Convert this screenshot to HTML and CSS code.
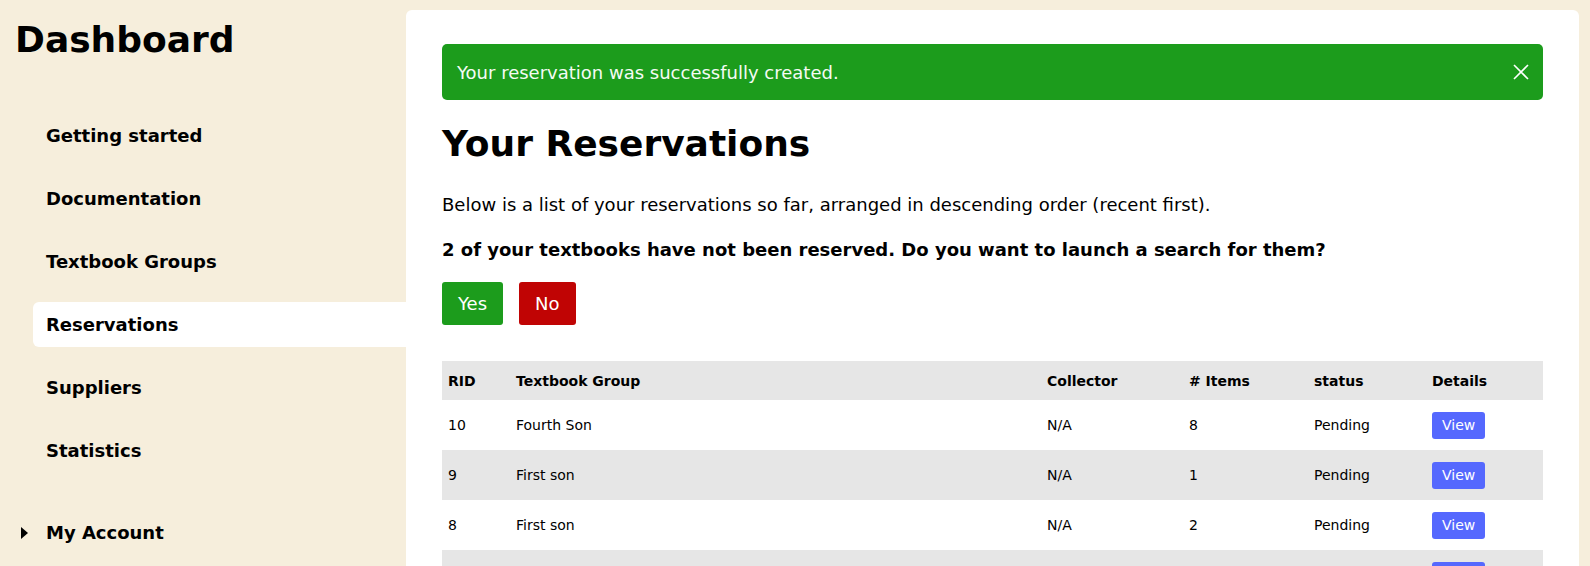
FILE: index.html
```html
<!DOCTYPE html>
<html lang="en">
<head>
  <meta charset="UTF-8">
  <meta name="viewport" content="width=device-width, initial-scale=1.0">
  <title>Dashboard - Reservations</title>

  <link rel="stylesheet" href="styles.css">

</head>

<body>
  <div id="wrap">
    <!-- 사이드바 -->
    <aside class="side">
      <h1 class="logo">Dashboard</h1>
      <ul class="nav">
        <li><a href="#">Getting started</a></li>
        <li><a href="#">Documentation</a></li>
        <li><a href="#">Textbook Groups</a></li>
        <li class="on"><a href="#">Reservations</a></li>
        <li><a href="#">Suppliers</a></li>
        <li><a href="#">Statistics</a></li>
      </ul>
      <div class="account">
        <span class="arrow"></span>
        <a href="#">My Account</a>
      </div>
    </aside>

    <!-- 본문 카드 -->
    <main class="card">
      <div class="alert">
        <span>Your reservation was successfully created.</span>
        <button class="close" type="button" aria-label="Close">
          <svg width="16" height="16" viewBox="0 0 16 16">
            <path d="M1 1 L15 15 M15 1 L1 15" stroke="#fff" stroke-width="1.6" fill="none"/>
          </svg>
        </button>
      </div>

      <h2 class="tit">Your Reservations</h2>
      <p class="desc">Below is a list of your reservations so far, arranged in descending order (recent first).</p>
      <p class="ask">2 of your textbooks have not been reserved. Do you want to launch a search for them?</p>

      <div class="btns">
        <button class="btn yes" type="button">Yes</button>
        <button class="btn no" type="button">No</button>
      </div>

      <table class="list">
        <colgroup>
          <col class="c1">
          <col class="c2">
          <col class="c3">
          <col class="c4">
          <col class="c5">
          <col class="c6">
        </colgroup>
        <thead>
          <tr>
            <th>RID</th>
            <th>Textbook Group</th>
            <th>Collector</th>
            <th># Items</th>
            <th>status</th>
            <th>Details</th>
          </tr>
        </thead>
        <tbody>
          <tr>
            <td>10</td>
            <td>Fourth Son</td>
            <td>N/A</td>
            <td>8</td>
            <td>Pending</td>
            <td><a class="view" href="#">View</a></td>
          </tr>
          <tr>
            <td>9</td>
            <td>First son</td>
            <td>N/A</td>
            <td>1</td>
            <td>Pending</td>
            <td><a class="view" href="#">View</a></td>
          </tr>
          <tr>
            <td>8</td>
            <td>First son</td>
            <td>N/A</td>
            <td>2</td>
            <td>Pending</td>
            <td><a class="view" href="#">View</a></td>
          </tr>
          <tr>
            <td>7</td>
            <td>Second son</td>
            <td>N/A</td>
            <td>5</td>
            <td>Pending</td>
            <td><a class="view" href="#">View</a></td>
          </tr>
        </tbody>
      </table>
    </main>
  </div>
</body>
</html>
```

FILE: styles.css
```css
html, body{
  margin: 0;
  padding: 0;
}
body{
  background-color: #f6eedc;
  font-family: "DejaVu Sans", sans-serif;
  font-size: 18px;
  color: #000;
}
ul, ol{
  margin: 0;
  padding: 0;
  list-style: none;
}
a{
  color: inherit;
  text-decoration: none;
}

/* 전체부모 */
#wrap{
  display: flex;
  align-items: flex-start;
}

/* 사이드바 */
.side{
  flex-shrink: 0;
  width: 406px;
}
.logo{
  margin: 19px 0 0;
  padding-left: 15px;
  font-size: 36px;
  font-weight: bold;
}
.nav{
  margin-top: 53px;
}
.nav>li{
  display: flex;
  align-items: center;
  height: 45px;
  margin: 0 0 18px 33px;
  padding-left: 13px;
  border-radius: 6px 0 0 6px;
  font-weight: bold;
}
/* 현재 메뉴 - 카드와 이어짐 */
.nav>li.on{
  background-color: #fff;
}
/* 마지막 li 마진과 겹쳐서 실제 간격은 37px */
.account{
  display: flex;
  align-items: center;
  height: 45px;
  margin-top: 37px;
  padding-left: 21px;
  font-weight: bold;
}
.arrow{
  width: 0;
  height: 0;
  margin-right: 18px;
  border-left: 7px solid #000;
  border-top: 6px solid transparent;
  border-bottom: 6px solid transparent;
}

/* 본문 카드 */
.card{
  flex: 1;
  min-height: 700px;
  margin: 10px 11px 0 0;
  padding: 34px 36px;
  background-color: #fff;
  border-radius: 6px;
}

.alert{
  display: flex;
  align-items: center;
  justify-content: space-between;
  height: 56px;
  padding: 0 14px 0 15px;
  background-color: #1c9c1c;
  border-radius: 5px;
  color: #f4fbf4;
}
.close{
  display: flex;
  padding: 0;
  border: none;
  background: none;
  cursor: pointer;
}

.tit{
  margin: 23px 0 30px;
  font-size: 36px;
  font-weight: bold;
}
.desc{
  margin: 0 0 24px;
}
.ask{
  margin: 0 0 22px;
  font-weight: bold;
}

.btns{
  display: flex;
  gap: 16px;
  margin-bottom: 36px;
}
.btn{
  height: 43px;
  padding: 0 16px;
  border: none;
  border-radius: 3px;
  font: 18px "DejaVu Sans", sans-serif;
  color: #fff;
}
.yes{
  background-color: #1c9c1c;
}
.no{
  background-color: #c00404;
}

/* 예약 목록 */
.list{
  width: 100%;
  border-collapse: collapse;
  table-layout: fixed;
  font-size: 14px;
}
.c1{ width: 68px; }
.c2{ width: 531px; }
.c3{ width: 142px; }
.c4{ width: 125px; }
.c5{ width: 118px; }
.c6{ width: 117px; }

.list th,
.list td{
  padding: 0 6px;
  text-align: left;
}
.list th{
  height: 39px;
  background-color: #e6e6e6;
}
.list td{
  height: 50px;
}
.list tbody tr:nth-child(even){
  background-color: #e6e6e6;
}

.view{
  display: inline-block;
  height: 27px;
  padding: 0 10px;
  line-height: 27px;
  border-radius: 3px;
  background-color: #5568fe;
  color: #fff;
}
```
